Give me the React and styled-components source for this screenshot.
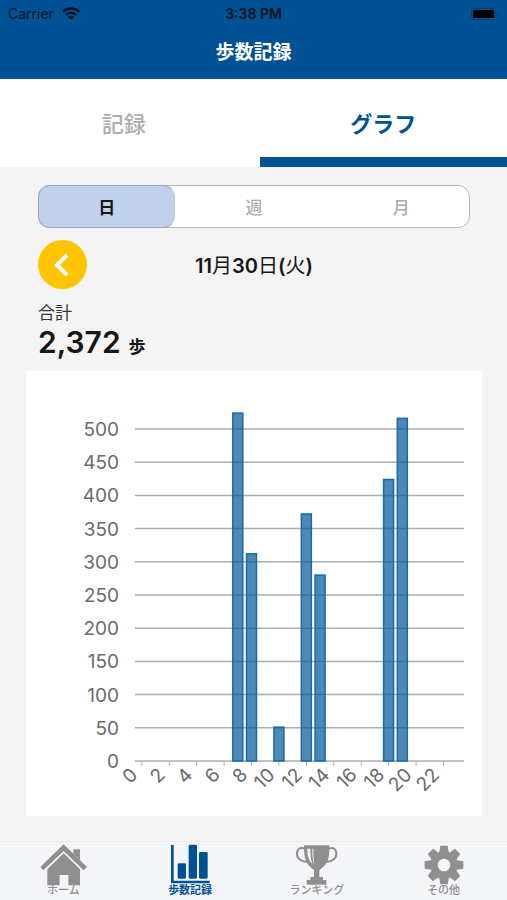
import React, { useState } from 'react';
import styled, { createGlobalStyle } from 'styled-components';

const GlobalStyle = createGlobalStyle`
  * {
    box-sizing: border-box;
  }

  body {
    margin: 0;
    background-color: #f4f4f4;
    color: #161616;
    font-family: Inter, 'Noto Sans CJK JP', sans-serif;
  }

  button {
    padding: 0;
    border: none;
    background: none;
    font-family: inherit;
    cursor: pointer;
  }
`;

const Screen = styled.div`
  display: flex;
  flex-direction: column;
  min-height: 100vh;
`;

const Header = styled.header`
  background-color: #005294;
`;

const StatusBar = styled.div`
  display: grid;
  grid-template-columns: 1fr auto 1fr;
  align-items: center;
  height: 27px;
  padding: 0 8px;
  color: #06121f;
  font-size: 14px;
`;

const Carrier = styled.span`
  display: flex;
  align-items: center;
  gap: 8px;
`;

const Clock = styled.span`
  font-weight: 600;
`;

const Battery = styled.svg`
  justify-self: end;
`;

const Title = styled.h1`
  margin: 0;
  color: #fff;
  font-size: 19px;
  font-weight: 700;
  line-height: 52px;
  text-align: center;
`;

const Tabs = styled.div`
  display: grid;
  grid-template-columns: 1fr 1fr;
  gap: 12px;
  background-color: #fff;
`;

const Tab = styled.button`
  height: 88px;
  border-top: 8px solid transparent;
  border-bottom: 10px solid ${({ $active }) => ($active ? '#005294' : 'transparent')};
  color: ${({ $active }) => ($active ? '#005294' : '#adadad')};
  font-size: 22px;
  font-weight: ${({ $active }) => ($active ? 700 : 500)};
`;

const Summary = styled.section`
  padding: 18px 37px 12px 38px;
`;

const Segments = styled.div`
  display: grid;
  grid-template-columns: 1fr 1fr 1fr;
  gap: 12px;
  height: 43px;
  border: 1px solid #b9b9b9;
  border-radius: 12px;
  background-color: #fff;
`;

const Segment = styled.button`
  margin: -1px;
  border: 1px solid ${({ $active }) => ($active ? '#94a6c4' : 'transparent')};
  border-right-color: transparent;
  border-radius: 12px;
  background-color: ${({ $active }) => ($active ? '#c2d1ea' : 'transparent')};
  color: ${({ $active }) => ($active ? '#161616' : '#adadad')};
  font-size: 17px;
  font-weight: ${({ $active }) => ($active ? 700 : 500)};
`;

const DateRow = styled.div`
  display: grid;
  grid-template-columns: 49px 1fr 49px;
  align-items: center;
  margin-top: 12px;
`;

const PrevButton = styled.button`
  display: flex;
  align-items: center;
  justify-content: center;
  width: 49px;
  height: 49px;
  border-radius: 50%;
  background-color: #ffc400;
`;

const DateText = styled.p`
  margin: 0;
  font-size: 20px;
  font-weight: 400;
  text-align: center;
`;

const Strong = styled.b`
  font-weight: 600;
`;

const TotalLabel = styled.p`
  margin: 12px 0 0;
  color: #333;
  font-size: 17px;
  line-height: 24px;
`;

const Total = styled.p`
  display: flex;
  align-items: baseline;
  gap: 8px;
  margin: 0;
  font-size: 30px;
  font-weight: 600;
  line-height: 34px;
`;

const Unit = styled.span`
  font-size: 17px;
  font-weight: 700;
  line-height: 17px;
`;

const ChartCard = styled.section`
  margin: 0 25px 25px 26px;
  background-color: #fff;
`;

const ChartSvg = styled.svg`
  display: block;
  width: 100%;
  font-size: 19px;
  fill: #6b6b6b;
`;

const Nav = styled.nav`
  display: grid;
  grid-template-columns: repeat(4, 1fr);
  margin-top: auto;
  height: 59px;
  border-top: 1px solid #ececec;
  background-color: #f4f5f8;
`;

const NavItem = styled.a`
  display: flex;
  flex-direction: column;
  align-items: center;
  padding-top: 2px;
  color: ${({ $active }) => ($active ? '#005294' : '#8f8f8f')};
  font-size: 11px;
  font-weight: ${({ $active }) => ($active ? 700 : 500)};
  line-height: 12px;
  text-decoration: none;

  svg {
    margin-bottom: -2px;
  }
`;

const STEPS = [
  { hour: 7, count: 524 },
  { hour: 8, count: 312 },
  { hour: 10, count: 51 },
  { hour: 12, count: 372 },
  { hour: 13, count: 280 },
  { hour: 18, count: 424 },
  { hour: 19, count: 516 },
];

const LEFT = 109;
const RIGHT = 438;
const BASE = 390;
const PER_STEP = 332 / 500;
const SLOT = (RIGHT - LEFT) / 24;

const hourX = (hour) => LEFT + SLOT * (hour + 0.5);
const countY = (count) => BASE - count * PER_STEP;

function StepsChart() {
  const levels = [0, 50, 100, 150, 200, 250, 300, 350, 400, 450, 500];
  const hours = [0, 2, 4, 6, 8, 10, 12, 14, 16, 18, 20, 22];

  return (
    <ChartSvg viewBox="0 0 456 445" role="img" aria-label="歩数グラフ">
      {levels.map((level) => (
        <g key={level}>
          <line x1={LEFT} x2={RIGHT} y1={countY(level)} y2={countY(level)} stroke="#adadad" strokeWidth="1.5" />
          <text x="93" y={countY(level) + 7} textAnchor="end">{level}</text>
        </g>
      ))}
      {hours.map((hour) => (
        <g key={hour}>
          <line x1={hourX(hour)} x2={hourX(hour)} y1={BASE} y2={BASE + 5} stroke="#adadad" />
          <text
            textAnchor="end"
            transform={`translate(${hourX(hour) - 3} ${BASE + 15}) rotate(-45)`}
          >
            {hour}
          </text>
        </g>
      ))}
      {STEPS.map(({ hour, count }) => (
        <rect
          key={hour}
          x={hourX(hour) - 5}
          y={countY(count)}
          width="10"
          height={count * PER_STEP}
          fill="#005799"
          fillOpacity="0.7"
          stroke="#1a6aa9"
          strokeWidth="1.5"
        />
      ))}
    </ChartSvg>
  );
}

function WifiIcon() {
  return (
    <svg width="18" height="13" viewBox="0 0 18 13" fill="none" stroke="currentColor" strokeWidth="2.4" aria-hidden="true">
      <path d="M1 4.8C5.4 0.4 12.6 0.4 17 4.8" />
      <path d="M4 8C6.8 5.2 11.2 5.2 14 8" />
      <path d="M9 13L6 10C7.7 8.4 10.3 8.4 12 10Z" fill="currentColor" stroke="none" />
    </svg>
  );
}

function HomeIcon() {
  return (
    <svg width="47" height="42" viewBox="0 0 141 126" fill="currentColor" aria-hidden="true">
      <path d="M71 1L141 69L131 79L71 21L10 79L1 69Z" />
      <path d="M100 16H120V48L100 29Z" />
      <path d="M71 28L120 76V124H85V93H59V124H22V76Z" />
    </svg>
  );
}

function BarsIcon() {
  return (
    <svg width="39" height="42" viewBox="0 0 117 126" fill="currentColor" aria-hidden="true">
      <path d="M0 3H8V110H116V118H0Z" />
      <rect x="20" y="58" width="25" height="46" rx="4" />
      <rect x="53" y="2" width="25" height="102" rx="4" />
      <rect x="84" y="24" width="26" height="80" rx="4" />
    </svg>
  );
}

function TrophyIcon() {
  return (
    <svg width="42" height="42" viewBox="0 0 126 126" fill="currentColor" aria-hidden="true">
      <path d="M24 4H100V12C100 48 94 62 70 78V99H81V108H91V122H32V108H43V99H54V78C32 62 24 48 24 12Z" />
      <path d="M26 14C10 8 3 18 3 30C3 43 15 54 33 53M98 14C114 8 121 18 121 30C121 43 109 54 91 53" fill="none" stroke="currentColor" strokeWidth="6" />
      <path d="M34 14H43C43 37 45 49 50 59C38 51 34 36 34 14Z" fill="#f4f5f8" />
      <path d="M49 14H52C52 37 53 49 56 62C50 52 49 36 49 14Z" fill="#f4f5f8" />
    </svg>
  );
}

function GearIcon() {
  return (
    <svg width="40" height="42" viewBox="-60 -63 120 126" fill="currentColor" aria-hidden="true">
      {[0, 45, 90, 135, 180, 225, 270, 315].map((angle) => (
        <path key={angle} d="M-15 -34L-11 -58H11L15 -34Z" transform={`rotate(${angle})`} />
      ))}
      <circle r="30" fill="none" stroke="currentColor" strokeWidth="22" />
    </svg>
  );
}

const NAV_ITEMS = [
  { label: 'ホーム', Icon: HomeIcon },
  { label: '歩数記録', Icon: BarsIcon, active: true },
  { label: 'ランキング', Icon: TrophyIcon },
  { label: 'その他', Icon: GearIcon },
];

function App() {
  const [tab, setTab] = useState('グラフ');
  const [period, setPeriod] = useState('日');

  return (
    <Screen>
      <GlobalStyle />
      <Header>
        <StatusBar>
          <Carrier>
            Carrier
            <WifiIcon />
          </Carrier>
          <Clock>3:38 PM</Clock>
          <Battery width="28" height="12" viewBox="0 0 28 12" aria-hidden="true">
            <rect x="0.5" y="0.5" width="24" height="11" rx="3" fill="none" stroke="#083b68" />
            <rect x="2" y="2" width="21" height="8" rx="1" fill="#000" />
            <path d="M26 4C28 5 28 7 26 8Z" fill="#083b68" />
          </Battery>
        </StatusBar>
        <Title>歩数記録</Title>
      </Header>
      <Tabs role="tablist">
        {['記録', 'グラフ'].map((name) => (
          <Tab key={name} role="tab" aria-selected={tab === name} $active={tab === name} onClick={() => setTab(name)}>
            {name}
          </Tab>
        ))}
      </Tabs>
      <Summary>
        <Segments>
          {['日', '週', '月'].map((name) => (
            <Segment key={name} aria-pressed={period === name} $active={period === name} onClick={() => setPeriod(name)}>
              {name}
            </Segment>
          ))}
        </Segments>
        <DateRow>
          <PrevButton aria-label="前の日">
            <svg width="20" height="24" viewBox="0 0 20 24" fill="none" stroke="#fff" strokeWidth="4" aria-hidden="true">
              <path d="M14 2L4 12L14 22" />
            </svg>
          </PrevButton>
          <DateText>
            <Strong>11</Strong>月<Strong>30</Strong>日<Strong>(</Strong>火<Strong>)</Strong>
          </DateText>
        </DateRow>
        <TotalLabel>合計</TotalLabel>
        <Total>
          2,372
          <Unit>歩</Unit>
        </Total>
      </Summary>
      <ChartCard>
        <StepsChart />
      </ChartCard>
      <Nav>
        {NAV_ITEMS.map(({ label, Icon, active }) => (
          <NavItem key={label} href="#" $active={active}>
            <Icon />
            {label}
          </NavItem>
        ))}
      </Nav>
    </Screen>
  );
}

export default App;
